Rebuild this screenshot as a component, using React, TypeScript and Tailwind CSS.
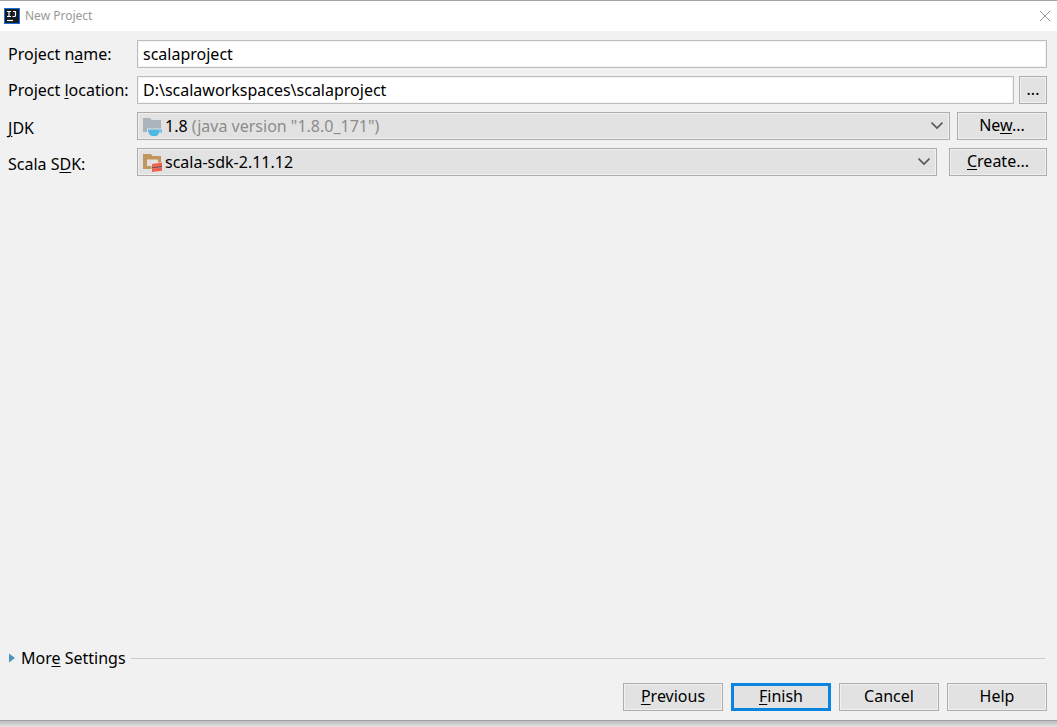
import type { ButtonHTMLAttributes, ReactNode } from 'react';
import { useState } from 'react';
import clsx from 'clsx';

function Key({ children }: { children: ReactNode }) {
  return <span className="underline decoration-1 underline-offset-2">{children}</span>;
}

function PushButton({ className, primary, children, ...rest }: ButtonHTMLAttributes<HTMLButtonElement> & { primary?: boolean }) {
  return (
    <button
      type="button"
      className={clsx(
        'flex h-7 shrink-0 items-center justify-center bg-[#e2e2e2] pb-0.5',
        primary ? 'border-3 border-[#0a84e0]' : 'border border-[#adadad] shadow-[inset_0_0_0_1px_#f0f0f0]',
        className,
      )}
      {...rest}
    >
      {children}
    </button>
  );
}

function Chevron() {
  return (
    <svg className="pointer-events-none absolute top-2 right-[7px] h-3 w-3" viewBox="0 0 12 12" aria-hidden="true">
      <path d="M.5 2.500 6 8l5.500-5.500" fill="none" stroke="#5a5a5a" strokeWidth="1.700" />
    </svg>
  );
}

function JdkIcon() {
  return (
    <svg className="h-5 w-5" viewBox="0 0 20 20" aria-hidden="true">
      <path d="M1 2h7l1.500 2H19v8.500H5V16H1z" fill="#a9b3bb" />
      <path d="M6 13.500h14v3h-2.800c-.8 1.800-1.700 3.500-3.400 3.500h-3.600C8 20 6.200 17 6 13.500z" fill="#4db8e2" />
      <path d="M17.500 14.500H19v1h-1.500z" fill="#e2e2e2" />
    </svg>
  );
}

function ScalaIcon() {
  return (
    <svg className="h-5 w-5" viewBox="0 0 20 20" aria-hidden="true">
      <path d="M1 2h8l1.500 2H19v6l-3 .5V7.500H5V14h4.500v3H1z" fill="#c1975f" />
      <path d="M10 12 20 10.500v3.200L10 15z" fill="#f35f4d" />
      <path d="M10 15 20 13.700v1.500L10 16.700z" fill="#87484a" />
      <path d="M10 16.700 20 15.200v3.500L10 20z" fill="#f35f4d" />
    </svg>
  );
}

function ComboBox({ id, value, icon, children }: { id: string; value: string; icon: ReactNode; children: ReactNode }) {
  return (
    <div className="relative h-7 min-w-0 flex-1">
      <select
        id={id}
        defaultValue={value}
        className="h-full w-full appearance-none border border-[#adadad] bg-[#e2e2e2] px-7 text-transparent shadow-[inset_0_0_0_1px_#f0f0f0] outline-none"
      >
        <option value={value}>{value}</option>
      </select>
      <div aria-hidden="true" className="pointer-events-none absolute inset-y-0 left-[5px] flex items-center gap-[3px]">
        {icon}
        <span className="whitespace-pre">{children}</span>
      </div>
      <Chevron />
    </div>
  );
}

const fieldClass = 'h-7 min-w-0 flex-1 border border-[#bdbdbd] bg-white px-[5px] shadow-[inset_0_0_0_1px_#f3f3f3] outline-none';

export default function App() {
  const [name, setName] = useState('scalaproject');
  const [location, setLocation] = useState('D:\\scalaworkspaces\\scalaproject');

  return (
    <div className="flex min-h-screen flex-col bg-[#e0e0e0] font-['Noto_Sans','Open_Sans',sans-serif] text-[16px] leading-6 text-black">
      <div className="flex flex-1 flex-col border-t border-b border-t-[#a5a5a5] border-b-[#a0a0a0] bg-[#f1f1f1]">
        <header className="flex h-[30px] items-center bg-white pr-[5px] pl-1">
          <svg className="h-4 w-4" viewBox="0 0 16 16" aria-hidden="true">
            <rect x=".5" y=".5" width="15" height="15" fill="#171b22" stroke="#1671d9" />
            <path d="M3 3.500h4M5 3.500v5M3 8.500h4M9 3.500h3M11.500 3.500v4q0 1-1 1H8.500" fill="none" stroke="#fff" strokeWidth="1.200" />
            <path d="M3 12.500h6" stroke="#fff" strokeWidth="1.200" />
          </svg>
          <h1 className="ml-[5px] flex-1 text-[12px] text-[#999999]">New Project</h1>
          <button type="button" aria-label="Close" className="p-px pt-0">
            <svg className="h-3 w-3" viewBox="0 0 12 12" aria-hidden="true">
              <path d="m1 1 10 10M11 1 1 11" fill="none" stroke="#929292" />
            </svg>
          </button>
        </header>

        <main className="flex flex-1 flex-col px-2 pt-[9px] pb-[9px]">
          <div className="grid grid-cols-[129px_1fr] items-center gap-y-2 pr-0.5">
            <label htmlFor="name" className="whitespace-nowrap">Project n<Key>a</Key>me:</label>
            <div className="flex">
              <input id="name" className={fieldClass} value={name} onChange={(e) => setName(e.target.value)} />
            </div>

            <label htmlFor="location" className="whitespace-nowrap">Project <Key>l</Key>ocation:</label>
            <div className="flex gap-[5px]">
              <input id="location" className={fieldClass} value={location} onChange={(e) => setLocation(e.target.value)} />
              <PushButton className="w-7" aria-label="Browse">...</PushButton>
            </div>

            <label htmlFor="jdk" className="pt-1"><Key>J</Key>DK</label>
            <div className="flex gap-[7px]">
              <ComboBox id="jdk" value={'1.8 (java version "1.8.0_171")'} icon={<JdkIcon />}>
                1.8 <span className="text-[#8c8c8c]">(java version "1.8.0_171")</span>
              </ComboBox>
              <PushButton className="w-[90px]"><span>Ne<Key>w</Key>...</span></PushButton>
            </div>

            <label htmlFor="scala" className="pt-1">Scala S<Key>D</Key>K:</label>
            <div className="flex gap-3">
              <ComboBox id="scala" value="scala-sdk-2.11.12" icon={<ScalaIcon />}>scala-sdk-2.11.12</ComboBox>
              <PushButton className="w-[98px]"><span><Key>C</Key>reate...</span></PushButton>
            </div>
          </div>

          <div className="mt-auto flex items-center gap-[5px] pr-1">
            <button type="button" aria-expanded="false" className="flex items-center gap-1.5">
              <svg className="h-3 w-[7px]" viewBox="0 0 7 12" aria-hidden="true">
                <path d="M1 1.500 7 6l-6 4.500z" fill="#4a93bd" />
              </svg>
              <span>Mor<Key>e</Key> Settings</span>
            </button>
            <div className="h-px flex-1 bg-[#cbcbcb]" />
          </div>

          <footer className="mt-[13px] flex justify-end gap-2 pr-0.5">
            <PushButton className="w-[100px]"><span><Key>P</Key>revious</span></PushButton>
            <PushButton className="w-[100px]" primary><span><Key>F</Key>inish</span></PushButton>
            <PushButton className="w-[100px]">Cancel</PushButton>
            <PushButton className="w-[100px]">Help</PushButton>
          </footer>
        </main>
      </div>
      <div className="h-1.5 bg-linear-to-b from-[#bcbcbc] to-[#e4e4e4]" />
    </div>
  );
}
